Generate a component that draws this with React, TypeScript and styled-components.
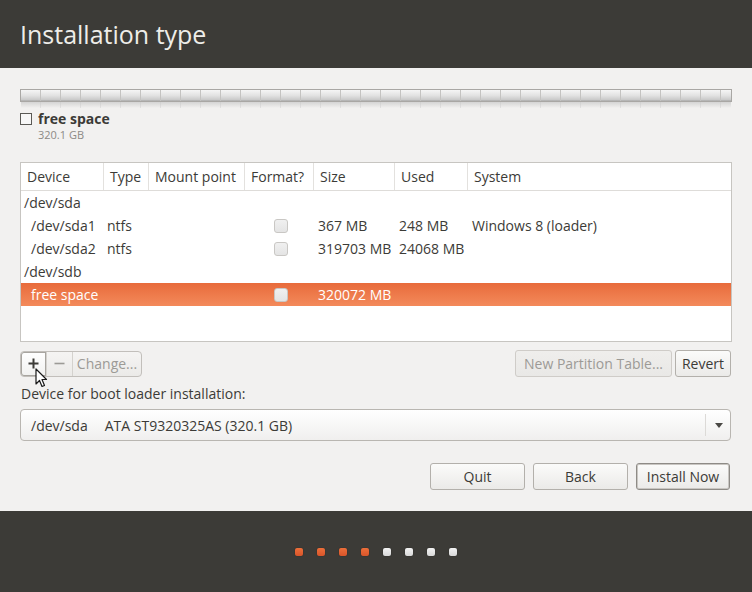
import React from 'react'
import styled, { createGlobalStyle } from 'styled-components'

const GlobalStyle = createGlobalStyle`
  html, body {
    margin: 0;
    padding: 0;
    background: #f2f1f0;
  }
  body {
    font-family: 'Open Sans', 'Noto Sans', 'Liberation Sans', sans-serif;
    color: #3c3b37;
  }
`

const Page = styled.div`
  width: 752px;
  height: 592px;
  display: flex;
  flex-direction: column;
  background: #f2f1f0;
  overflow: hidden;
`

const Header = styled.header`
  height: 68px;
  flex-shrink: 0;
  display: flex;
  align-items: center;
  padding: 0 20px;
  background: #3c3b37;
`

const Title = styled.h1`
  margin: 0;
  font-size: 25px;
  font-weight: 400;
  color: #eeede9;
`

const Main = styled.main`
  flex: 1;
  display: flex;
  flex-direction: column;
  padding: 21px 20px 0 20px;
`

const BarWrap = styled.div`
  display: flex;
  flex-direction: column;
`

const PartitionBar = styled.div`
  height: 11px;
  border: 1px solid #a9a7a4;
  background:
    repeating-linear-gradient(to right, transparent 0, transparent 19px, #c4c3c1 19px, #c4c3c1 20px),
    linear-gradient(to bottom, #f5f5f5 0%, #e2e2e2 50%, #c9c9c9 90%, #a6a6a6 100%);
`

const BarReflection = styled.div`
  height: 6px;
  background:
    repeating-linear-gradient(to right, transparent 0, transparent 19px, rgba(200, 200, 200, 0.4) 19px, rgba(200, 200, 200, 0.4) 20px),
    linear-gradient(to bottom, rgba(200, 200, 200, 0.7), rgba(242, 241, 240, 0));
  margin: 0 1px;
`

const Legend = styled.div`
  display: flex;
  gap: 6px;
  margin-top: 3px;
`

const LegendSwatch = styled.span`
  width: 10px;
  height: 10px;
  margin-top: 2px;
  border: 1px solid #5a5955;
  background: #f7f7f7;
  flex-shrink: 0;
`

const LegendText = styled.div`
  display: flex;
  flex-direction: column;
`

const LegendName = styled.span`
  font-size: 14px;
  font-weight: 700;
  line-height: 16px;
`

const LegendSize = styled.span`
  margin-top: 2px;
  font-size: 11px;
  line-height: 12px;
  color: #8c8a86;
`

const TableBox = styled.div`
  margin-top: 21px;
  height: 178px;
  border: 1px solid #c7c5c1;
  background: #fff;
  display: flex;
  flex-direction: column;
`

const columns = '83px 45px 96px 69px 81px 73px 1fr'

const HeadRow = styled.div`
  display: grid;
  grid-template-columns: ${columns};
  height: 27px;
  border-bottom: 1px solid #dedcd9;
`

const HeadCell = styled.div<{ $last?: boolean }>`
  display: flex;
  align-items: center;
  padding-left: 6px;
  font-size: 14px;
  color: #3c3b37;
  border-right: ${(p) => (p.$last ? 'none' : '1px solid #e3e1de')};
  white-space: nowrap;
`

const Row = styled.div<{ $selected?: boolean }>`
  display: grid;
  grid-template-columns: ${columns};
  height: 23px;
  align-items: center;
  font-size: 14px;
  color: ${(p) => (p.$selected ? '#ffffff' : '#3c3b37')};
  background: ${(p) => (p.$selected ? 'linear-gradient(to bottom, #e86b3b, #f38a5b)' : 'transparent')};
`

const Cell = styled.div<{ $indent?: number }>`
  padding-left: ${(p) => p.$indent ?? 3}px;
  white-space: nowrap;
  display: flex;
  align-items: center;
`

const DiskCell = styled.div`
  grid-column: 1 / -1;
  padding-left: 3px;
`

const FormatBox = styled.span`
  width: 12px;
  height: 12px;
  border: 1px solid #c9c7c4;
  border-radius: 3px;
  background: linear-gradient(to bottom, #f0f0f0, #e4e4e4);
`

const ToolRow = styled.div`
  margin-top: 8px;
  display: flex;
  justify-content: space-between;
  align-items: center;
`

const ButtonGroup = styled.div`
  position: relative;
  display: flex;
  height: 24px;
  border: 1px solid #c2bfbb;
  border-radius: 4px;
  background: linear-gradient(to bottom, #f5f4f3, #ebeae8);
`

const GroupButton = styled.div<{ $disabled?: boolean; $first?: boolean; $w: number }>`
  width: ${(p) => p.$w}px;
  display: flex;
  align-items: center;
  justify-content: center;
  font-size: 14px;
  color: ${(p) => (p.$disabled ? '#9c9a96' : '#3c3b37')};
  border-left: ${(p) => (p.$first ? 'none' : '1px solid #d4d2ce')};
  background: ${(p) => (p.$first ? 'linear-gradient(to bottom, #ffffff, #f1f1f0)' : 'transparent')};
  border-radius: ${(p) => (p.$first ? '3px 0 0 3px' : '0')};
  box-shadow: ${(p) => (p.$first ? 'inset 0 0 0 1px #a8a5a0' : 'none')};
`

const Cursor = styled.svg`
  position: absolute;
  left: 14px;
  top: 16px;
  pointer-events: none;
`

const RightButtons = styled.div`
  display: flex;
  gap: 3px;
  margin-right: 1px;
`

const Button = styled.div<{ $disabled?: boolean; $w: number; $default?: boolean }>`
  box-sizing: border-box;
  width: ${(p) => p.$w}px;
  height: 27px;
  display: flex;
  align-items: center;
  justify-content: center;
  font-size: 14px;
  color: ${(p) => (p.$disabled ? '#9c9a96' : '#3c3b37')};
  border: 1px solid ${(p) => (p.$default ? '#8e8b86' : p.$disabled ? '#cfccc8' : '#b3b0ab')};
  border-radius: 3px;
  background: ${(p) =>
    p.$disabled ? 'linear-gradient(to bottom, #efeeec, #e9e8e6)' : 'linear-gradient(to bottom, #fbfbfa, #ebeae8)'};
  box-shadow: ${(p) => (p.$default ? 'inset 0 0 0 1px #c9c6c2' : 'none')};
  white-space: nowrap;
`

const FieldLabel = styled.div`
  margin-top: 8px;
  font-size: 14px;
  line-height: 18px;
  padding-left: 1px;
`

const Combo = styled.div`
  margin-top: 6px;
  height: 30px;
  margin-right: 1px;
  display: flex;
  align-items: center;
  border: 1px solid #b9b6b1;
  border-radius: 4px;
  background: linear-gradient(to bottom, #ffffff, #f0efee);
  font-size: 14px;
`

const ComboText = styled.div`
  flex: 1;
  display: flex;
  gap: 17px;
  padding-left: 10px;
`

const ComboArrow = styled.div`
  width: 24px;
  height: 22px;
  border-left: 1px solid #dcdad7;
  display: flex;
  align-items: center;
  justify-content: center;
`

const ArrowDown = styled.span`
  width: 0;
  height: 0;
  border-left: 4px solid transparent;
  border-right: 4px solid transparent;
  border-top: 5px solid #4a4945;
  margin-left: 1px;
`

const Actions = styled.div`
  margin-top: 22px;
  display: flex;
  justify-content: flex-end;
  gap: 8px;
  padding-right: 2px;
`

const Footer = styled.footer`
  height: 81px;
  flex-shrink: 0;
  background: #3c3b37;
  display: flex;
  align-items: center;
  justify-content: center;
  gap: 14px;
`

const Dot = styled.span<{ $done?: boolean }>`
  width: 8px;
  height: 8px;
  border-radius: 2px;
  background: ${(p) =>
    p.$done ? 'linear-gradient(to bottom, #ec6f3a, #d9552a)' : 'linear-gradient(to bottom, #f2f2f2, #d8d8d8)'};
  box-shadow: 0 0 1px rgba(0, 0, 0, 0.6);
`

interface Partition {
  device: string
  type?: string
  mount?: string
  format?: boolean
  size?: string
  used?: string
  system?: string
  disk?: boolean
  selected?: boolean
}

const partitions: Partition[] = [
  { device: '/dev/sda', disk: true },
  { device: '/dev/sda1', type: 'ntfs', format: true, size: '367 MB', used: '248 MB', system: 'Windows 8 (loader)' },
  { device: '/dev/sda2', type: 'ntfs', format: true, size: '319703 MB', used: '24068 MB' },
  { device: '/dev/sdb', disk: true },
  { device: 'free space', format: true, size: '320072 MB', selected: true },
]

const headers = ['Device', 'Type', 'Mount point', 'Format?', 'Size', 'Used', 'System']

export default function App() {
  return (
    <>
      <GlobalStyle />
      <Page>
        <Header>
          <Title>Installation type</Title>
        </Header>
        <Main>
          <BarWrap>
            <PartitionBar />
            <BarReflection />
          </BarWrap>
          <Legend>
            <LegendSwatch />
            <LegendText>
              <LegendName>free space</LegendName>
              <LegendSize>320.1 GB</LegendSize>
            </LegendText>
          </Legend>
          <TableBox>
            <HeadRow>
              {headers.map((h, i) => (
                <HeadCell key={h} $last={i === headers.length - 1}>
                  {h}
                </HeadCell>
              ))}
            </HeadRow>
            {partitions.map((p) =>
              p.disk ? (
                <Row key={p.device}>
                  <DiskCell>{p.device}</DiskCell>
                </Row>
              ) : (
                <Row key={p.device} $selected={p.selected}>
                  <Cell $indent={10}>{p.device}</Cell>
                  <Cell>{p.type}</Cell>
                  <Cell>{p.mount}</Cell>
                  <Cell $indent={29}>{p.format && <FormatBox />}</Cell>
                  <Cell $indent={4}>{p.size}</Cell>
                  <Cell $indent={4}>{p.used}</Cell>
                  <Cell $indent={4}>{p.system}</Cell>
                </Row>
              )
            )}
          </TableBox>
          <ToolRow>
            <ButtonGroup>
              <GroupButton $first $w={25}>
                <svg width="11" height="11" viewBox="0 0 11 11">
                  <path d="M5.5 0.5v10M0.5 5.5h10" stroke="#3c3b37" strokeWidth="2" />
                </svg>
              </GroupButton>
              <GroupButton $disabled $w={25}>
                <svg width="11" height="11" viewBox="0 0 11 11">
                  <path d="M0.5 5.5h10" stroke="#9c9a96" strokeWidth="1.6" />
                </svg>
              </GroupButton>
              <GroupButton $disabled $w={68}>
                Change...
              </GroupButton>
              <Cursor width="13" height="20" viewBox="0 0 13 20">
                <path
                  d="M1 1 L1 16 L4.5 12.5 L7 18.5 L9.5 17.5 L7 11.5 L11.5 11.5 Z"
                  fill="#ffffff"
                  stroke="#1a1a1a"
                  strokeWidth="1.2"
                  strokeLinejoin="round"
                />
              </Cursor>
            </ButtonGroup>
            <RightButtons>
              <Button $disabled $w={157}>
                New Partition Table...
              </Button>
              <Button $w={56}>Revert</Button>
            </RightButtons>
          </ToolRow>
          <FieldLabel>Device for boot loader installation:</FieldLabel>
          <Combo>
            <ComboText>
              <span>/dev/sda</span>
              <span>ATA ST9320325AS (320.1 GB)</span>
            </ComboText>
            <ComboArrow>
              <ArrowDown />
            </ComboArrow>
          </Combo>
          <Actions>
            <Button $w={95}>Quit</Button>
            <Button $w={95}>Back</Button>
            <Button $w={94} $default>
              Install Now
            </Button>
          </Actions>
        </Main>
        <Footer>
          {[true, true, true, true, false, false, false, false].map((done, i) => (
            <Dot key={i} $done={done} />
          ))}
        </Footer>
      </Page>
    </>
  )
}
